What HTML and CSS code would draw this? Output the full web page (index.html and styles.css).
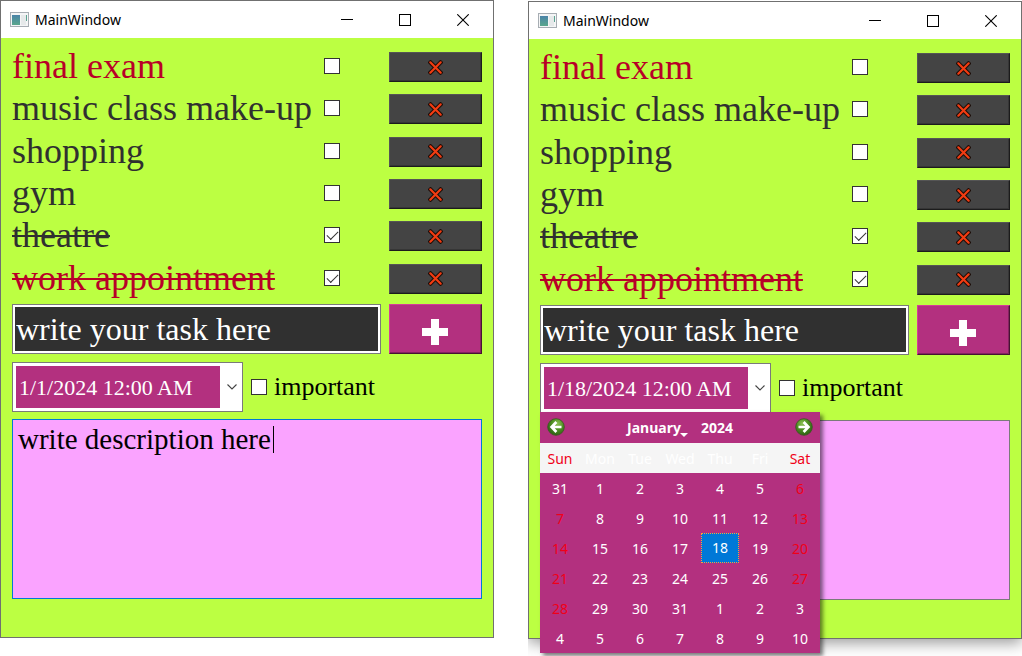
FILE: index.html
```html
<!DOCTYPE html>
<html lang="en">
<head>
<meta charset="utf-8">
<title>MainWindow</title>
<link rel="stylesheet" href="styles.css">
</head>
<body>
<svg class="defs" aria-hidden="true">
  <defs>
    <linearGradient id="app-fill" x1="0" y1="0" x2="0" y2="1">
      <stop offset="0" stop-color="#4a83a8"/><stop offset="1" stop-color="#5aa78c"/>
    </linearGradient>
    <radialGradient id="nav-fill" cx="0.4" cy="0.3" r="0.75">
      <stop offset="0" stop-color="#8cc152"/><stop offset="0.5" stop-color="#4a8a20"/><stop offset="1" stop-color="#2c5d12"/>
    </radialGradient>
    <symbol id="app" viewBox="0 0 19 15">
      <rect x="0.5" y="0.5" width="18" height="14" fill="#f4f5f6" stroke="#a7adb3"/>
      <rect x="2" y="3" width="8" height="10" fill="url(#app-fill)"/>
      <rect x="11" y="3" width="5" height="10" fill="#e6e9ea"/>
      <rect x="16" y="3" width="1" height="6" fill="#5ba391"/>
    </symbol>
    <symbol id="cross" viewBox="0 0 15 15">
      <path d="M2.5 2.5 12.5 12.5M12.5 2.5 2.5 12.5" stroke="#1c0d08" stroke-width="4.2" stroke-linecap="square"/>
      <path d="M2.3 2.3 12.7 12.7M12.7 2.3 2.3 12.7" stroke="#f23c12" stroke-width="2.2" stroke-linecap="round"/>
    </symbol>
    <symbol id="plus" viewBox="0 0 26 26">
      <path d="M9 0h8v9h9v8h-9v9H9v-9H0V9h9z" fill="#fff"/>
    </symbol>
    <symbol id="min" viewBox="0 0 12 12"><path d="M0 5.5h12" stroke="#000"/></symbol>
    <symbol id="max" viewBox="0 0 12 12"><rect x="0.5" y="0.5" width="11" height="11" fill="none" stroke="#000"/></symbol>
    <symbol id="close" viewBox="0 0 12 12"><path d="M0.3 0.3 11.7 11.7M11.7 0.3 0.3 11.7" stroke="#000" stroke-width="1.1"/></symbol>
    <symbol id="chevron" viewBox="0 0 10 6"><path d="M0.5 0.5 5 5 9.5 0.5" fill="none" stroke="#444" stroke-width="1.1"/></symbol>
    <symbol id="next" viewBox="0 0 18 18">
      <circle cx="9" cy="9" r="8.3" fill="url(#nav-fill)" stroke="#39571f" stroke-width="0.8"/>
      <path d="M3.5 9H12M8.6 4 13.4 9 8.6 14" fill="none" stroke="#fff" stroke-width="2.7"/>
    </symbol>
  </defs>
</svg>

<main class="desktop">
  <section class="window">
    <header class="titlebar">
      <svg class="app-icon"><use href="#app"/></svg>
      <h1 class="title">MainWindow</h1>
      <button class="control" aria-label="Minimize"><svg class="glyph"><use href="#min"/></svg></button>
      <button class="control" aria-label="Maximize"><svg class="glyph"><use href="#max"/></svg></button>
      <button class="control" aria-label="Close"><svg class="glyph"><use href="#close"/></svg></button>
    </header>
    <div class="content">
      <ul class="tasks">
        <li class="task urgent"><label class="name" for="a1">final exam</label><span class="tick"><input class="check" type="checkbox" id="a1"></span><button class="delete" aria-label="Delete final exam"><svg class="x"><use href="#cross"/></svg></button></li>
        <li class="task"><label class="name" for="a2">music class make-up</label><span class="tick"><input class="check" type="checkbox" id="a2"></span><button class="delete" aria-label="Delete music class make-up"><svg class="x"><use href="#cross"/></svg></button></li>
        <li class="task"><label class="name" for="a3">shopping</label><span class="tick"><input class="check" type="checkbox" id="a3"></span><button class="delete" aria-label="Delete shopping"><svg class="x"><use href="#cross"/></svg></button></li>
        <li class="task"><label class="name" for="a4">gym</label><span class="tick"><input class="check" type="checkbox" id="a4"></span><button class="delete" aria-label="Delete gym"><svg class="x"><use href="#cross"/></svg></button></li>
        <li class="task done"><label class="name" for="a5">theatre</label><span class="tick"><input class="check" type="checkbox" id="a5" checked></span><button class="delete" aria-label="Delete theatre"><svg class="x"><use href="#cross"/></svg></button></li>
        <li class="task urgent done"><label class="name" for="a6">work appointment</label><span class="tick"><input class="check" type="checkbox" id="a6" checked></span><button class="delete" aria-label="Delete work appointment"><svg class="x"><use href="#cross"/></svg></button></li>
      </ul>
      <div class="entry">
        <input class="new-task" type="text" aria-label="Task" value="write your task here">
        <button class="add" aria-label="Add task"><svg class="plus"><use href="#plus"/></svg></button>
      </div>
      <div class="options">
        <div class="date">
          <input class="date-text" type="text" aria-label="Date" value="1/1/2024 12:00 AM">
          <button class="date-open" aria-label="Open calendar"><svg class="chevron"><use href="#chevron"/></svg></button>
        </div>
        <label class="important"><input class="check" type="checkbox">important</label>
      </div>
      <div class="notes">
        <textarea class="description active" aria-label="Description">write description here</textarea>
        <span class="caret"></span>
      </div>
    </div>
  </section>

  <section class="window front">
    <header class="titlebar">
      <svg class="app-icon"><use href="#app"/></svg>
      <h1 class="title">MainWindow</h1>
      <button class="control" aria-label="Minimize"><svg class="glyph"><use href="#min"/></svg></button>
      <button class="control" aria-label="Maximize"><svg class="glyph"><use href="#max"/></svg></button>
      <button class="control" aria-label="Close"><svg class="glyph"><use href="#close"/></svg></button>
    </header>
    <div class="content">
      <ul class="tasks">
        <li class="task urgent"><label class="name" for="b1">final exam</label><span class="tick"><input class="check" type="checkbox" id="b1"></span><button class="delete" aria-label="Delete final exam"><svg class="x"><use href="#cross"/></svg></button></li>
        <li class="task"><label class="name" for="b2">music class make-up</label><span class="tick"><input class="check" type="checkbox" id="b2"></span><button class="delete" aria-label="Delete music class make-up"><svg class="x"><use href="#cross"/></svg></button></li>
        <li class="task"><label class="name" for="b3">shopping</label><span class="tick"><input class="check" type="checkbox" id="b3"></span><button class="delete" aria-label="Delete shopping"><svg class="x"><use href="#cross"/></svg></button></li>
        <li class="task"><label class="name" for="b4">gym</label><span class="tick"><input class="check" type="checkbox" id="b4"></span><button class="delete" aria-label="Delete gym"><svg class="x"><use href="#cross"/></svg></button></li>
        <li class="task done"><label class="name" for="b5">theatre</label><span class="tick"><input class="check" type="checkbox" id="b5" checked></span><button class="delete" aria-label="Delete theatre"><svg class="x"><use href="#cross"/></svg></button></li>
        <li class="task urgent done"><label class="name" for="b6">work appointment</label><span class="tick"><input class="check" type="checkbox" id="b6" checked></span><button class="delete" aria-label="Delete work appointment"><svg class="x"><use href="#cross"/></svg></button></li>
      </ul>
      <div class="entry">
        <input class="new-task" type="text" aria-label="Task" value="write your task here">
        <button class="add" aria-label="Add task"><svg class="plus"><use href="#plus"/></svg></button>
      </div>
      <div class="options">
        <div class="date">
          <input class="date-text" type="text" aria-label="Date" value="1/18/2024 12:00 AM">
          <button class="date-open" aria-label="Close calendar"><svg class="chevron"><use href="#chevron"/></svg></button>
          <div class="calendar">
            <div class="cal-head">
              <button class="nav" aria-label="Previous month"><svg class="nav-icon back"><use href="#next"/></svg></button>
              <div class="cal-title">
                <button class="month">January</button>
                <button class="year">2024</button>
              </div>
              <button class="nav" aria-label="Next month"><svg class="nav-icon"><use href="#next"/></svg></button>
            </div>
            <table class="days">
              <thead><tr><th class="rest">Sun</th><th>Mon</th><th>Tue</th><th>Wed</th><th>Thu</th><th>Fri</th><th class="rest">Sat</th></tr></thead>
              <tbody>
                <tr><td>31</td><td>1</td><td>2</td><td>3</td><td>4</td><td>5</td><td class="rest">6</td></tr>
                <tr><td class="rest">7</td><td>8</td><td>9</td><td>10</td><td>11</td><td>12</td><td class="rest">13</td></tr>
                <tr><td class="rest">14</td><td>15</td><td>16</td><td>17</td><td><span class="selected">18</span></td><td>19</td><td class="rest">20</td></tr>
                <tr><td class="rest">21</td><td>22</td><td>23</td><td>24</td><td>25</td><td>26</td><td class="rest">27</td></tr>
                <tr><td class="rest">28</td><td>29</td><td>30</td><td>31</td><td>1</td><td>2</td><td>3</td></tr>
                <tr><td>4</td><td>5</td><td>6</td><td>7</td><td>8</td><td>9</td><td>10</td></tr>
              </tbody>
            </table>
          </div>
        </div>
        <label class="important"><input class="check" type="checkbox">important</label>
      </div>
      <div class="notes">
        <textarea class="description" aria-label="Description"></textarea>
      </div>
    </div>
  </section>
</main>
</body>
</html>
```
FILE: styles.css
```css
* {
  box-sizing: border-box;
}

body {
  margin: 0;
  background: #fff;
  font-family: "Liberation Serif", "Times New Roman", serif;
  color: #303030;
}

button,
input,
textarea {
  margin: 0;
  padding: 0;
  border: 0;
  border-radius: 0;
  font: inherit;
  color: inherit;
  background: none;
  outline: none;
}

svg {
  display: block;
}

.defs {
  position: absolute;
  width: 0;
  height: 0;
}

.desktop {
  display: flex;
  align-items: flex-start;
  gap: 34px;
  min-height: 100vh;
  overflow: hidden;
}

/* Window frame */
.window {
  flex: 1;
  min-width: 0;
  border: 1px solid #707070;
  background: #bcff42;
}

.front {
  margin-top: 1px;
  box-shadow: 0 4px 14px rgba(0, 0, 0, 0.4);
  clip-path: inset(0 0 -24px 0);
}

.titlebar {
  display: flex;
  align-items: center;
  height: 37px;
  padding: 0 1px 0 9px;
  background: #fff;
}

.app-icon {
  width: 19px;
  height: 15px;
}

.title {
  flex: 1;
  margin: 0 0 0 6px;
  font: 400 14px/20px "Noto Sans", "Segoe UI", sans-serif;
  color: #000;
}

.control {
  display: grid;
  place-items: center;
  width: 58px;
  height: 36px;
}

.glyph {
  width: 12px;
  height: 12px;
}

.content {
  padding: 8px 11px 38px;
}

/* Task list */
.tasks {
  display: grid;
  grid-template-rows: repeat(6, 1fr);
  height: 254px;
  margin: 0 0 4px;
  padding: 0;
  list-style: none;
}

.task {
  display: grid;
  grid-template-columns: 1fr 57px 93px;
  gap: 8px;
  align-items: center;
}

.name {
  padding-bottom: 2px;
  font-size: 36px;
  line-height: 36px;
  white-space: nowrap;
}

.tick {
  padding-bottom: 2px;
}

.urgent .name {
  color: #b80028;
}

.done .name {
  text-decoration: line-through;
  text-decoration-thickness: 2px;
}

.check {
  appearance: none;
  display: block;
  flex: none;
  width: 16px;
  height: 16px;
  border: 1px solid #333;
  background: #fff;
}

.check:checked {
  display: grid;
  place-items: center;
}

.check:checked::before {
  content: "";
  width: 10px;
  height: 5px;
  border: solid #333;
  border-width: 0 0 1px 1px;
  transform: translateY(-1px) rotate(-45deg);
}

.delete,
.add {
  display: grid;
  place-items: center;
  border: 1px solid;
}

.delete {
  height: 30px;
  border-color: #555 #1c1c1c #1c1c1c #555;
  background: #444;
  box-shadow: inset -1px -1px #363636;
}

.x {
  width: 15px;
  height: 15px;
}

/* New task */
.entry {
  display: grid;
  grid-template-columns: 1fr 93px;
  gap: 8px;
  margin-bottom: 8px;
}

.new-task {
  min-width: 0;
  height: 50px;
  padding: 0 3px;
  border: 1px solid #7a7a7a;
  background: #303030;
  box-shadow: inset 0 0 0 2px #fff;
  font-size: 32px;
  color: #fff;
}

.add {
  padding: 6px 1px 0 0;
  border-color: #d63c98 #471332 #471332 #d63c98;
  background: #b3307f;
  box-shadow: inset -1px -1px #842460;
}

.plus {
  width: 26px;
  height: 26px;
}

.options {
  display: flex;
  align-items: center;
  gap: 8px;
  margin-bottom: 7px;
}

.date {
  position: relative;
  display: flex;
  width: 231px;
  height: 50px;
  padding: 3px 0 3px 3px;
  border: 1px solid #7a7a7a;
  background: #fff;
}

.date-text {
  flex: 1;
  min-width: 0;
  padding: 2px 0 0 3px;
  background: #b3307f;
  font-size: 22px;
  color: #fff;
}

.date-open {
  display: grid;
  place-items: center;
  width: 22px;
  padding-left: 2px;
}

.chevron {
  width: 10px;
  height: 6px;
}

.important {
  display: flex;
  align-items: center;
  gap: 7px;
  font-size: 26px;
  line-height: 32px;
  color: #000;
}

.notes {
  position: relative;
}

.description {
  display: block;
  width: 100%;
  height: 180px;
  padding: 2px 5px;
  border: 1px solid #7a7a7a;
  background: #faa3ff;
  font-size: 29px;
  line-height: 34px;
  color: #000;
  resize: none;
}

.description.active {
  border-color: #0078d7;
}

.caret {
  position: absolute;
  top: 7px;
  left: 261px;
  width: 1px;
  height: 27px;
  background: #000;
}

/* Calendar popup */
.calendar {
  position: absolute;
  z-index: 2;
  top: 48px;
  left: -1px;
  width: 280px;
  background: #b3307f;
  box-shadow: 3px 3px 4px rgba(0, 0, 0, 0.5);
  font-family: "Noto Sans", "Segoe UI", sans-serif;
  font-size: 14px;
  color: #fff;
}

.cal-head {
  display: flex;
  align-items: center;
  justify-content: space-between;
  height: 31px;
  padding: 0 7px 2px;
}

.nav-icon {
  width: 18px;
  height: 18px;
}

.back {
  transform: scaleX(-1);
}

.cal-title {
  display: flex;
  gap: 20px;
  padding-top: 2px;
  font-weight: 700;
}

.month {
  position: relative;
}

.month::after {
  content: "";
  position: absolute;
  right: -7px;
  bottom: 0;
  border: solid transparent;
  border-width: 4px 4px 0;
  border-top-color: #fff;
}

.days {
  width: 100%;
  border-collapse: collapse;
  table-layout: fixed;
}

.days th,
.days td {
  height: 30px;
  padding: 0;
  text-align: center;
  font-weight: 400;
}

.days thead {
  background: #f5f5f5;
}

.days .rest {
  color: #f00018;
}

.selected {
  display: block;
  margin: 0 1px;
  border: 1px dotted #ff9a3c;
  background: #0078d7;
  line-height: 28px;
}
```
